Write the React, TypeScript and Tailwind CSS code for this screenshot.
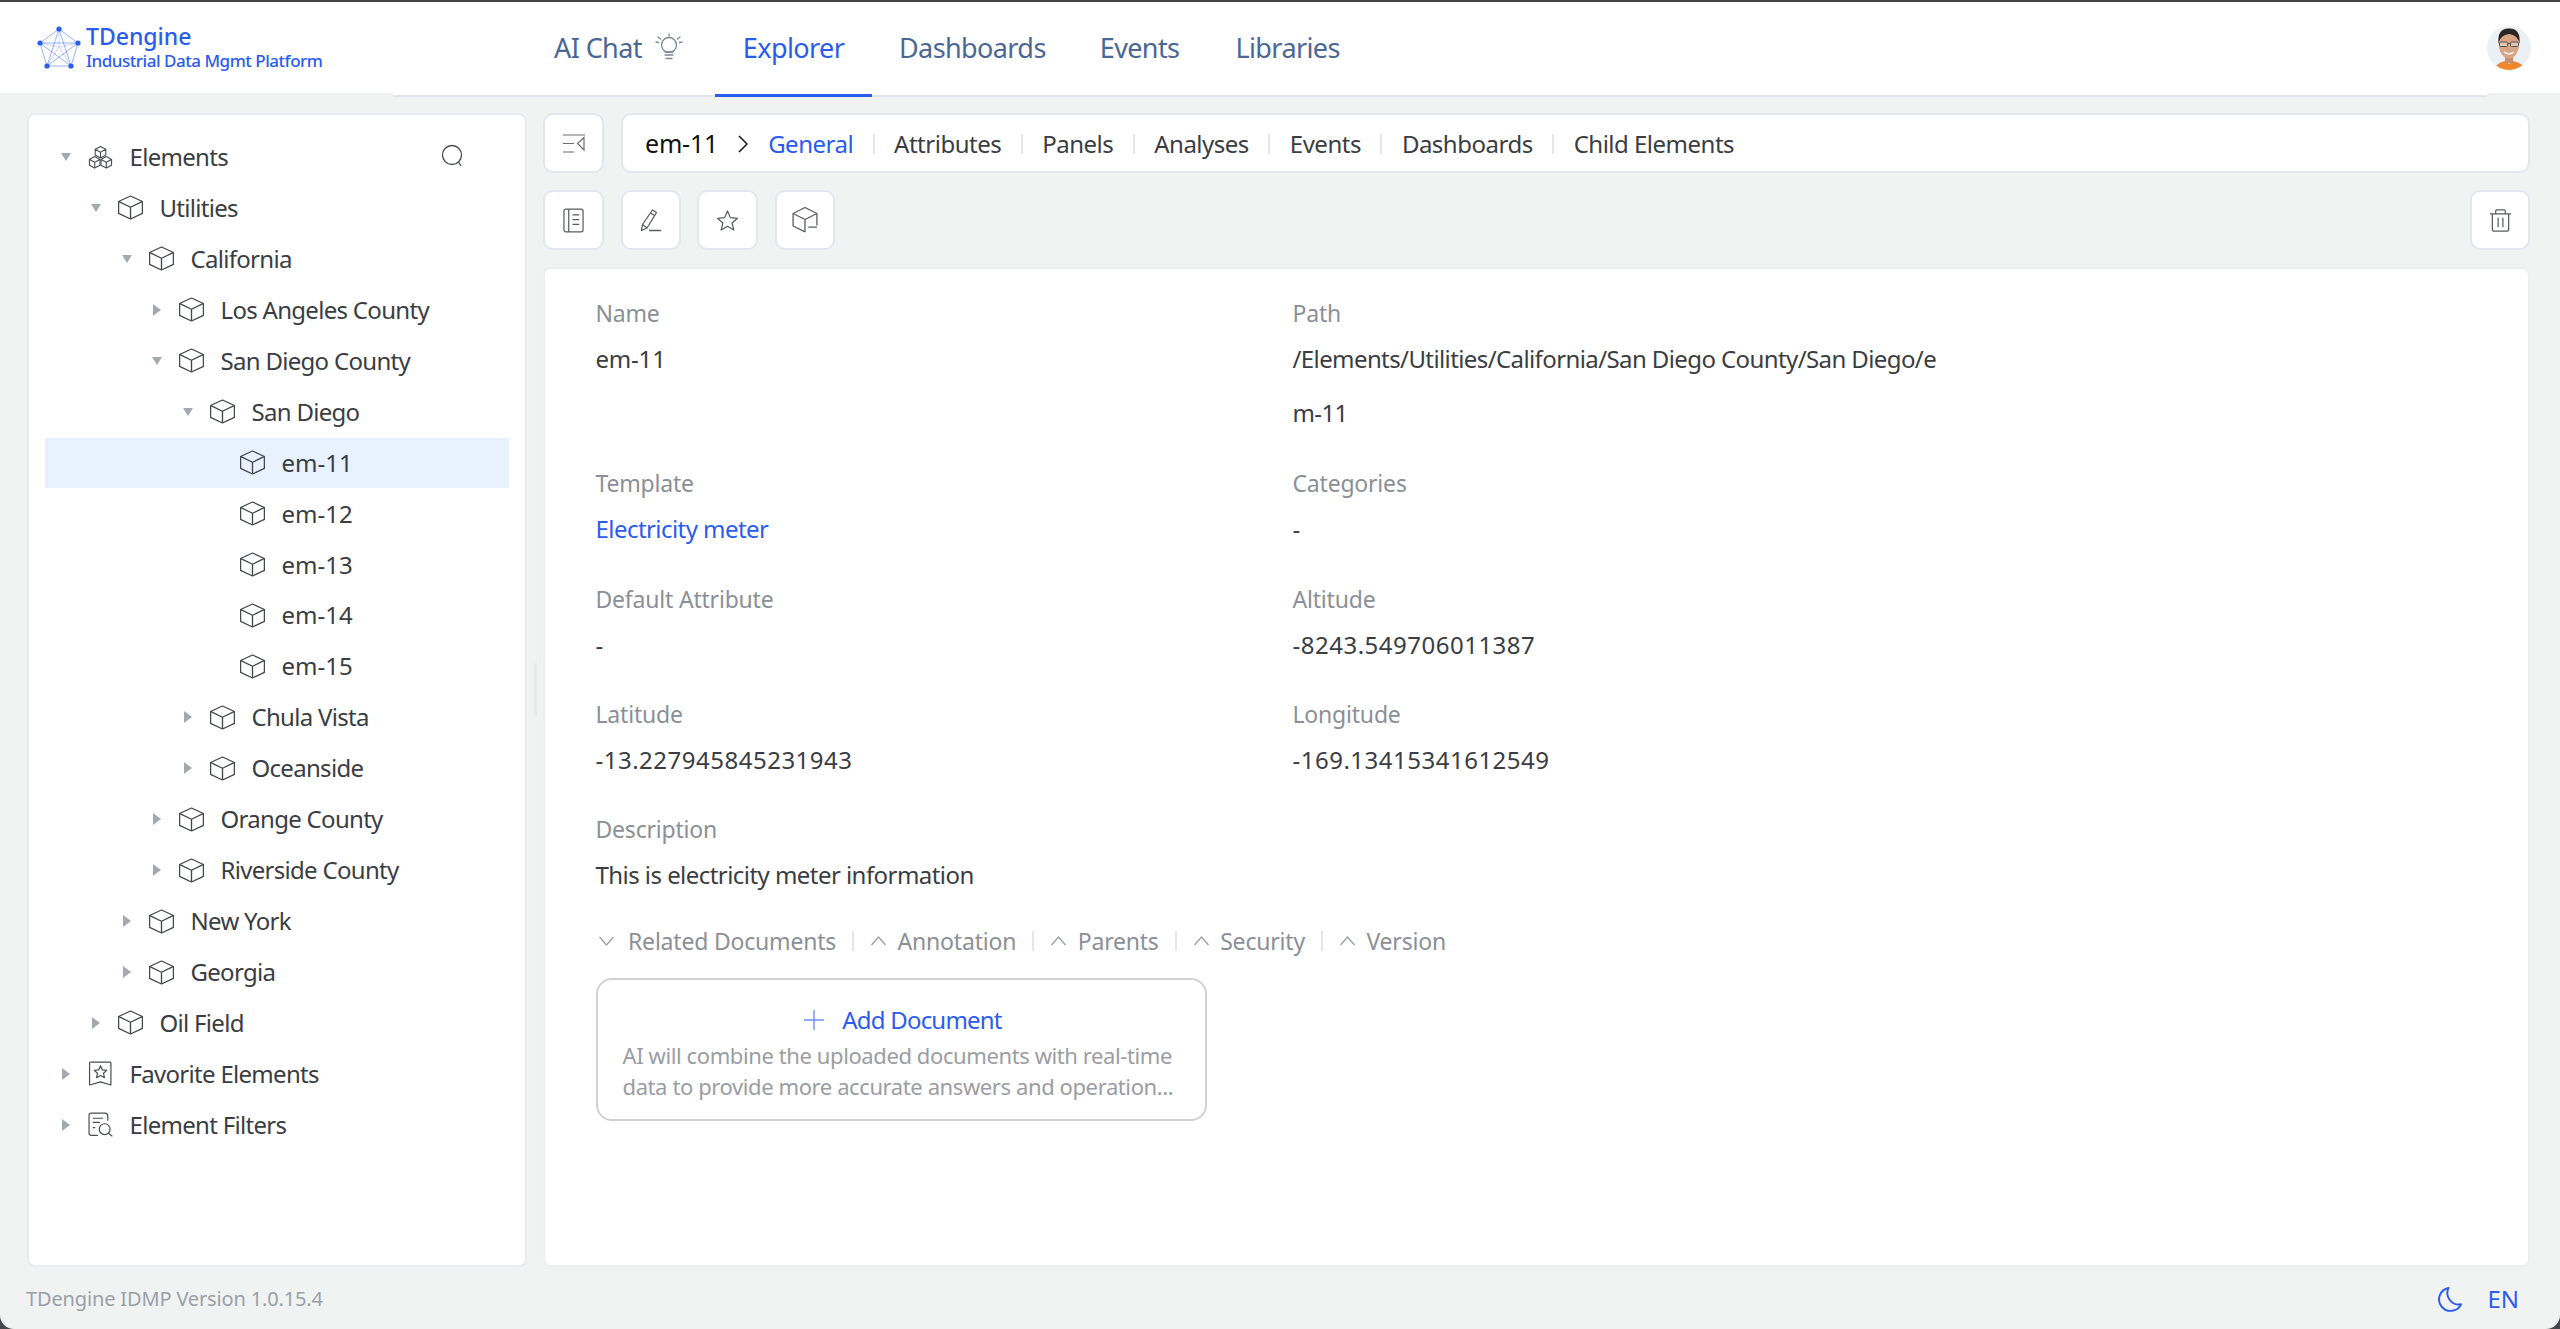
import React from "react";

const FONT = "font-['Noto_Sans','Liberation_Sans',sans-serif]";

function Cube({ className = "w-[25px] h-[25px]" }: { className?: string }) {
  return (
    <svg viewBox="1 0 22 24" fill="none" stroke="#45484d" strokeWidth="1.2" strokeLinejoin="round" preserveAspectRatio="none" className={className}>
      <path d="M12 1 L22.5 6.2 V17.6 L12 23 L1.5 17.6 V6.2 Z" />
      <path d="M1.8 6.4 L12 11.8 L22.2 6.4 M12 11.8 V22.8" />
    </svg>
  );
}

function Cubes() {
  return (
    <svg viewBox="0 0 26 26" fill="none" stroke="#4a4d52" strokeWidth="1.15" strokeLinejoin="round" className="w-[25px] h-[25px]">
      <path d="M13 1.5 L18.5 4.5 V10.5 L13 13.5 L7.5 10.5 V4.5 Z M7.5 4.5 L13 7.5 L18.5 4.5 M13 7.5 V13.5" />
      <path d="M7 12 L12.5 15 V21 L7 24 L1.5 21 V15 Z M1.5 15 L7 18 L12.5 15 M7 18 V24" />
      <path d="M19 12 L24.5 15 V21 L19 24 L13.5 21 V15 Z M13.5 15 L19 18 L24.5 15 M19 18 V24" />
    </svg>
  );
}

function FavIcon() {
  return (
    <svg viewBox="0 0 24 24" fill="none" stroke="#4a4d52" strokeWidth="1.15" strokeLinejoin="round" className="w-[25px] h-[25px]">
      <path d="M2.5 1 H21 a1 1 0 0 1 1 1 V23 L12 20 L1.5 23 V2 a1 1 0 0 1 1 -1 Z" />
      <path d="M12 4.5 L13.8 8.6 L18 9 L14.9 11.8 L15.8 16 L12 13.9 L8.2 16 L9.1 11.8 L6 9 L10.2 8.6 Z" />
    </svg>
  );
}

function FilterIcon() {
  return (
    <svg viewBox="0 0 24 24" fill="none" stroke="#4a4d52" strokeWidth="1.15" strokeLinecap="round" className="w-[25px] h-[25px]">
      <path d="M9 22.5 H3 a2 2 0 0 1 -2 -2 V3 a2 2 0 0 1 2 -2 H16 a3 3 0 0 1 3 3 V8" />
      <path d="M5 6 H14 M5 10 H11 M5 15 H6.5" />
      <circle cx="16" cy="16.5" r="5.2" />
      <path d="M20 20.5 L23 23" />
    </svg>
  );
}

function Caret({ open }: { open: boolean }) {
  return open ? (
    <svg viewBox="0 0 10 8" className="w-[10px] h-[8px]" fill="#a4a8b0"><path d="M0 0 H10 L5 8 Z" /></svg>
  ) : (
    <svg viewBox="0 0 8 12" className="w-[8px] h-[12px]" fill="#a4a8b0"><path d="M0 0 L8 6 L0 12 Z" /></svg>
  );
}

type Row = { name: string; pad: string; caret?: boolean; icon?: "cube" | "cubes" | "fav" | "filter"; sel?: boolean };

const rows: Row[] = [
  { name: "Elements", pad: "pl-[15px]", caret: true, icon: "cubes" },
  { name: "Utilities", pad: "pl-[45px]", caret: true },
  { name: "California", pad: "pl-[76px]", caret: true },
  { name: "Los Angeles County", pad: "pl-[106px]", caret: false },
  { name: "San Diego County", pad: "pl-[106px]", caret: true },
  { name: "San Diego", pad: "pl-[137px]", caret: true },
  { name: "em-11", pad: "pl-[167px]", sel: true },
  { name: "em-12", pad: "pl-[167px]" },
  { name: "em-13", pad: "pl-[167px]" },
  { name: "em-14", pad: "pl-[167px]" },
  { name: "em-15", pad: "pl-[167px]" },
  { name: "Chula Vista", pad: "pl-[137px]", caret: false },
  { name: "Oceanside", pad: "pl-[137px]", caret: false },
  { name: "Orange County", pad: "pl-[106px]", caret: false },
  { name: "Riverside County", pad: "pl-[106px]", caret: false },
  { name: "New York", pad: "pl-[76px]", caret: false },
  { name: "Georgia", pad: "pl-[76px]", caret: false },
  { name: "Oil Field", pad: "pl-[45px]", caret: false },
  { name: "Favorite Elements", pad: "pl-[15px]", caret: false, icon: "fav" },
  { name: "Element Filters", pad: "pl-[15px]", caret: false, icon: "filter" },
];

function TreeRow({ r }: { r: Row }) {
  const isEm = r.name.startsWith("em-");
  return (
    <div className={`flex items-center h-[50px] mb-[0.95px] ${r.pad} ${r.sel ? "bg-[#e8f1fe]" : ""}`}>
      <span className="w-[12px] flex justify-center shrink-0">
        {r.caret !== undefined && <Caret open={r.caret} />}
      </span>
      <span className="ml-[16px] w-[25px] h-[25px] shrink-0">
        {r.icon === "cubes" ? <Cubes /> : r.icon === "fav" ? <FavIcon /> : r.icon === "filter" ? <FilterIcon /> : <Cube />}
      </span>
      <span className={`ml-[16.5px] text-[24px] leading-[30px] text-[#3a3d42] whitespace-nowrap ${isEm ? "tracking-[0px]" : "tracking-[-0.7px]"}`}>{r.name}</span>
      {r.name === "Elements" && (
        <svg viewBox="0 0 24 24" fill="none" stroke="#4a4d52" strokeWidth="1.3" className="w-[24px] h-[24px] ml-auto mr-[45px] -mt-[2px]">
          <circle cx="12" cy="11" r="9.5" />
          <path d="M18.5 18 L21 22" />
        </svg>
      )}
    </div>
  );
}

function IconBtn({ children, className = "w-[61px]" }: { children: React.ReactNode; className?: string }) {
  return (
    <div className={`${className} h-[60px] flex items-center justify-center bg-white border-2 border-[#e3e6ec] rounded-[10px] shrink-0`}>
      {children}
    </div>
  );
}

function Field({ label, children, blue, num }: { label: string; children: React.ReactNode; blue?: boolean; num?: boolean }) {
  return (
    <div className="flex flex-col">
      <div className="text-[23px] leading-[30px] text-[#8b8f97] tracking-[-0.2px]">{label}</div>
      <div className={`mt-[16px] text-[24px] leading-[30px] ${num ? "tracking-[0.5px]" : "tracking-[-0.55px]"} ${blue ? "text-[#2b5cf0]" : "text-[#3a3d42]"}`}>{children}</div>
    </div>
  );
}

function Chevron({ down }: { down?: boolean }) {
  return (
    <svg viewBox="0 0 16 10" fill="none" stroke="#9a9ea6" strokeWidth="1.3" className="w-[17px] h-[10px] shrink-0">
      {down ? <path d="M1 1 L8 9 L15 1" /> : <path d="M1 9 L8 1 L15 9" />}
    </svg>
  );
}

function Logo() {
  const pts: [number, number][] = [[22, 4], [41, 18], [34, 41], [10, 41], [3, 18]];
  const blue = "#2b5cf0";
  return (
    <svg viewBox="0 0 44 46" className="w-[44px] h-[46px] shrink-0" fill="none" stroke={blue} strokeWidth="0.8">
      <path d="M22 4 L41 18 L34 41 L10 41 L3 18 Z" strokeOpacity="0.6" />
      <path d="M22 4 L34 41 L3 18 L41 18 L10 41 Z" strokeOpacity="0.6" />
      <path d="M22 4 L22 22 M41 18 L22 22 M34 41 L22 22 M10 41 L22 22 M3 18 L22 22" strokeOpacity="0.3" />
      {pts.map(([x, y]) => (
        <circle key={x + "-" + y} cx={x} cy={y} r="2.6" fill={blue} stroke="none" />
      ))}
    </svg>
  );
}

function Avatar() {
  return (
    <svg viewBox="0 0 44 44" className="w-[44px] h-[44px]">
      <defs>
        <clipPath id="av"><circle cx="22" cy="22" r="22" /></clipPath>
      </defs>
      <g clipPath="url(#av)">
        <rect width="44" height="44" fill="#eceff3" />
        <path d="M7 44 Q9 37 18 35 L22 38 L26 35 Q36 37 38 44 Z" fill="#f0872f" />
        <rect x="18" y="30" width="8" height="7" fill="#c98e70" />
        <ellipse cx="22" cy="19" rx="10" ry="13.5" fill="#d9a484" />
        <path d="M11.5 18 Q10 2 22 2.5 Q34 2 32.5 18 Q31 9 22 8 Q13 9 11.5 18 Z" fill="#2a2626" />
        <rect x="12.5" y="16" width="8" height="4.5" rx="1" fill="#eadcd2" fillOpacity="0.6" stroke="#555" strokeWidth="1" />
        <rect x="23.5" y="16" width="8" height="4.5" rx="1" fill="#eadcd2" fillOpacity="0.6" stroke="#555" strokeWidth="1" />
        <path d="M20.5 17.5 H23.5" stroke="#555" strokeWidth="1" />
        <path d="M17 26 Q22 29.5 27 26" stroke="#fff" strokeWidth="1.4" fill="none" />
      </g>
    </svg>
  );
}

function Sep() {
  return <span className="block w-[2px] h-[20px] bg-[#e3e6ec] shrink-0" />;
}

const crumbs = ["Attributes", "Panels", "Analyses", "Events", "Dashboards", "Child Elements"];
const sections = ["Annotation", "Parents", "Security", "Version"];

export default function App() {
  return (
    <div className={`${FONT} w-[2560px] h-[1329px] overflow-hidden bg-[#46474a] pt-[2px]`}>
      <div className="h-[1327px] bg-[#f1f3f3] rounded-b-[14px] overflow-hidden flex flex-col">
        <header className="h-[95px] flex shrink-0">
          <div className="w-[393px] h-[93px] bg-white border-b-2 border-[#eceef0] flex items-center pl-[37px]">
            <Logo />
            <div className="ml-[5px] -mt-[1px]">
              <div className="text-[23px] leading-[28px] font-medium text-[#2b5cf0]">TDengine</div>
              <div className="text-[17px] leading-[22px] font-medium text-[#2b5cf0] tracking-[-0.47px] whitespace-nowrap">Industrial Data Mgmt Platform</div>
            </div>
          </div>
          <nav className="flex-1 h-[95px] bg-white border-b-2 border-[#e3e6ec] flex items-stretch text-[27px] text-[#4a6796] tracking-[-0.6px]">
            <div className="ml-[161px] flex items-center w-[161px]">
              <span>AI Chat</span>
              <svg viewBox="0 0 30 30" fill="none" stroke="#7d8696" strokeWidth="1.3" strokeLinecap="round" className="w-[30px] h-[30px] ml-[12px] -mt-[2px]">
                <circle cx="15" cy="12" r="7.5" />
                <path d="M11 22 H19 M12 25.5 H18 M11 19 H19" />
                <path d="M4 4 L6.5 6 M26 4 L23.5 6 M15 1 V3 M2 9 L4.5 9.5 M28 9 L25.5 9.5" />
              </svg>
            </div>
            <div className="w-[157px] flex items-center justify-center text-[#2b5cf0] border-b-[3px] border-[#2b5cf0] -mb-[2px]">Explorer</div>
            <div className="ml-[27px] flex items-center">Dashboards</div>
            <div className="ml-[54px] flex items-center">Events</div>
            <div className="ml-[56px] flex items-center">Libraries</div>
          </nav>
          <div className="w-[73px] h-[93px] bg-white border-b-2 border-[#eceef0] flex items-center">
            <Avatar />
          </div>
        </header>

        <main className="flex h-[1170px] pt-[16px] pl-[27px] pr-[30px] shrink-0">
          <aside className="w-[500px] h-[1154px] bg-white border-2 border-[#e9ebee] rounded-[8px] pt-[17px] px-[16px] shrink-0">
            {rows.map((r) => (
              <TreeRow key={r.name} r={r} />
            ))}
          </aside>

          <div className="w-[16px] h-[1154px] flex items-center justify-center shrink-0">
            <span className="block w-[3px] h-[54px] rounded-full bg-[#e7e9eb]" />
          </div>

          <section className="flex-1 flex flex-col min-w-0">
            <div className="flex h-[60px]">
              <IconBtn className="w-[61px]">
                <svg viewBox="0 0 22 19" fill="none" stroke="#6a6d72" strokeWidth="1.2" className="w-[22px] h-[19px]">
                  <path d="M0 1 H22 M0 9.5 H11 M0 18 H11 M21 3.5 L14.5 9.5 L21 16 Z" />
                </svg>
              </IconBtn>
              <div className="ml-[17px] flex-1 h-[60px] bg-white border-2 border-[#e3e6ec] rounded-[10px] flex items-center pl-[22px] pt-[1px] text-[24px] text-[#3a3d42] tracking-[-0.5px]">
                <span className="text-[25px] text-[#111] tracking-[-0.2px]">em-11</span>
                <svg viewBox="0 0 10 18" fill="none" stroke="#111" strokeWidth="1.5" className="w-[10px] h-[18px] ml-[20px] mr-[20px]">
                  <path d="M1 1 L9 9 L1 17" />
                </svg>
                <span className="text-[#2b5cf0]">General</span>
                {crumbs.map((c) => (
                  <span key={c} className="flex items-center">
                    <span className="mx-[19.5px]"><Sep /></span>
                    <span>{c}</span>
                  </span>
                ))}
              </div>
            </div>

            <div className="flex mt-[17px] h-[60px] gap-[16px]">
              <IconBtn className="w-[61px] mr-px">
                <svg viewBox="0 0 22 26" fill="none" stroke="#5a5d62" strokeWidth="1.3" className="w-[21px] h-[25px]">
                  <rect x="1" y="1" width="20" height="24" rx="2" />
                  <path d="M6 1 V25 M10 7 H17 M10 12 H17 M10 17 H17" />
                </svg>
              </IconBtn>
              <IconBtn className="w-[60px]">
                <svg viewBox="0 0 22 24" fill="none" stroke="#5a5d62" strokeWidth="1.3" strokeLinejoin="round" className="w-[22px] h-[24px]">
                  <path d="M12.5 2 L16.5 4.5 L7 20 L1.5 22.5 L2.5 16.5 Z M10.5 5 L14.5 7.5 M2.5 16.5 L7 20" />
                  <path d="M9 22.5 H21" />
                </svg>
              </IconBtn>
              <IconBtn className="w-[61px] mr-px">
                <svg viewBox="0 0 24 24" fill="none" stroke="#5a5d62" strokeWidth="1.3" strokeLinejoin="round" className="w-[23px] h-[23px]">
                  <path d="M12 2 L15 9 L22.5 9.7 L16.8 14.6 L18.6 22 L12 18 L5.4 22 L7.2 14.6 L1.5 9.7 L9 9 Z" />
                </svg>
              </IconBtn>
              <IconBtn className="w-[60px]">
                <svg viewBox="1 1 24 24" fill="none" stroke="#5a5d62" strokeWidth="1.2" strokeLinejoin="round" className="w-[26px] h-[26px]">
                  <path d="M13 24 L2 18.5 V7 L13 1.5 L24 7 V18" />
                  <path d="M2 7 L13 12.5 L24 7 M13 12.5 V24 M16 19.5 H24" />
                </svg>
              </IconBtn>
              <IconBtn className="w-[60px] ml-auto">
                <svg viewBox="0 0 24 24" fill="none" stroke="#5a5d62" strokeWidth="1.3" className="w-[23px] h-[23px]">
                  <path d="M1 5 H23 M7 5 V2 a1 1 0 0 1 1 -1 H16 a1 1 0 0 1 1 1 V5 M3.5 5 V21 a2 2 0 0 0 2 2 H18.5 a2 2 0 0 0 2 -2 V5 M9.5 9 V19 M14.5 9 V19" />
                </svg>
              </IconBtn>
            </div>

            <div className="mt-[17px] h-[1000px] bg-white border-2 border-[#eceef0] rounded-[8px] pl-[50.5px] pt-[29px]">
              <div className="grid grid-cols-[697px_650px]">
                <div className="h-[170px]"><Field label="Name"><span className="tracking-[-0.2px]">em-11</span></Field></div>
                <div className="h-[170px]">
                  <div className="text-[23px] leading-[30px] text-[#8b8f97] tracking-[-0.2px]">Path</div>
                  <div className="mt-[16px] text-[24px] leading-[54px] -translate-y-[12px] text-[#3a3d42] break-all tracking-[-0.6px]">/Elements/Utilities/California/San Diego County/San Diego/em-11</div>
                </div>
                <div className="h-[116px]"><Field label="Template" blue>Electricity meter</Field></div>
                <div className="h-[116px]"><Field label="Categories">-</Field></div>
                <div className="h-[115px]"><Field label="Default Attribute">-</Field></div>
                <div className="h-[115px]"><Field label="Altitude" num>-8243.549706011387</Field></div>
                <div className="h-[115px]"><Field label="Latitude" num>-13.227945845231943</Field></div>
                <div className="h-[115px]"><Field label="Longitude" num>-169.13415341612549</Field></div>
                <div className="col-span-2 h-[109px]"><Field label="Description">This is electricity meter information</Field></div>
              </div>

              <div className="flex items-center h-[36px] pl-[2px] text-[23px] text-[#8b8f97] tracking-[-0.2px]">
                <Chevron down />
                <span className="ml-[13.5px]">Related Documents</span>
                {sections.map((s) => (
                  <span key={s} className="flex items-center">
                    <span className="mx-[16px]"><Sep /></span>
                    <Chevron />
                    <span className="ml-[10.5px]">{s}</span>
                  </span>
                ))}
              </div>

              <div className="mt-[19px] w-[611px] h-[143px] border-2 border-[#cfd1d4] rounded-[16px] pt-[22px] pl-[25px] pr-[20px]">
                <div className="flex items-center justify-center h-[36px] text-[24px] text-[#2b5cf0] tracking-[-0.8px] -ml-[1px]">
                  <svg viewBox="0 0 20 20" fill="none" stroke="#6f8ff5" strokeWidth="1.4" className="w-[20px] h-[20px] mr-[18px]">
                    <path d="M10 0 V20 M0 10 H20" />
                  </svg>
                  Add Document
                </div>
                <div className="mt-[2px] text-[22px] leading-[31px] text-[#9a9da3] tracking-[-0.4px] whitespace-nowrap">
                  <div>AI will combine the uploaded documents with real-time</div>
                  <div>data to provide more accurate answers and operation...</div>
                </div>
              </div>
            </div>
          </section>
        </main>

        <footer className="flex-1 flex items-center pl-[26px] pr-[30px] text-[20px] text-[#9aa0a8] pt-[2px]">
          <span className="tracking-[-0.15px]">TDengine IDMP Version 1.0.15.4</span>
          <svg viewBox="0 0 28 28" fill="none" stroke="#2b5cf0" strokeWidth="2" strokeLinejoin="round" className="w-[27px] h-[27px] ml-auto">
            <path d="M13 2 A12 12 0 1 0 26 19 A12 12 0 0 1 13 2 Z" />
          </svg>
          <span className="ml-[24px] mr-[11px] text-[24px] text-[#2b5cf0]">EN</span>
        </footer>
      </div>
    </div>
  );
}
